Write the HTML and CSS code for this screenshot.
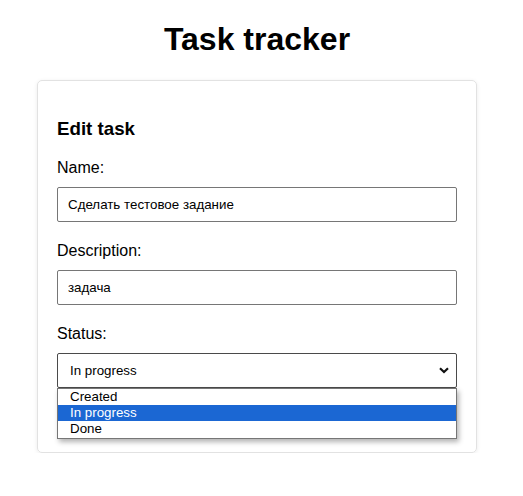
FILE: index.html
```html
<!DOCTYPE html>
<html lang="en">
<head>
<meta charset="utf-8">
<title>Task tracker</title>
<link rel="stylesheet" href="styles.css">
</head>
<body>
  <h1 class="title">Task tracker</h1>
  <div class="card">
    <h3 class="card-title">Edit task</h3>
    <form class="form">
      <div class="field">
        <label class="label" for="name">Name:</label>
        <input class="input" id="name" type="text" value="Сделать тестовое задание">
      </div>
      <div class="field">
        <label class="label" for="desc">Description:</label>
        <input class="input" id="desc" type="text" value="задача">
      </div>
      <div class="field field-last">
        <label class="label" for="status">Status:</label>
        <div class="select-wrap">
          <div class="select" id="status">
            <span class="select-value">In progress</span>
            <svg class="chevron" width="10" height="7" viewBox="0 0 10 7"><path d="M1 1.2 L5 5 L9 1.2" fill="none" stroke="#111" stroke-width="2.2"/></svg>
          </div>
          <ul class="options">
            <li class="option">Created</li>
            <li class="option option-active">In progress</li>
            <li class="option">Done</li>
          </ul>
        </div>
      </div>
    </form>
  </div>
</body>
</html>
```
FILE: styles.css
```css
html, body {
  background: #fff;
}
body {
  margin: 0 9px 0 0;
  font-family: "Liberation Sans", Arial, sans-serif;
  color: #000;
}
.title {
  font-size: 32px;
  font-weight: bold;
  text-align: center;
  margin: 21.44px 0;
  line-height: 36.8px;
}
.card {
  box-sizing: border-box;
  width: 440px;
  margin: 0 auto;
  padding: 19px 19px 64px;
  border: 1px solid #e2e2e2;
  border-radius: 5px;
  box-shadow: 0 1px 4px rgba(0, 0, 0, 0.08);
}
.card-title {
  font-size: 18.72px;
  font-weight: bold;
  margin: 18.72px 0;
  line-height: 21.5px;
}
.form {
  display: flex;
  flex-direction: column;
}
.field {
  display: flex;
  flex-direction: column;
  margin-bottom: 20px;
}
.field-last {
  margin-bottom: 0;
}
.label {
  font-size: 16px;
  line-height: 18px;
  margin-bottom: 10px;
}
.input {
  box-sizing: border-box;
  width: 400px;
  height: 35px;
  margin: 0;
  padding: 0 10px;
  border: 1px solid #767676;
  border-radius: 2px;
  font-family: "Liberation Sans", Arial, sans-serif;
  font-size: 13.33px;
  color: #000;
  background: #fff;
  outline: none;
}
.select-wrap {
  position: relative;
  width: 400px;
}
.select {
  box-sizing: border-box;
  height: 35px;
  display: flex;
  align-items: center;
  justify-content: space-between;
  padding: 0 6px 0 12px;
  border: 1px solid #4a4a4a;
  border-radius: 2px;
  font-size: 13.33px;
  background: #fff;
}
.chevron {
  display: block;
  margin-right: 1px;
}
.options {
  position: absolute;
  left: 0;
  top: 35px;
  width: 400px;
  box-sizing: border-box;
  margin: 0;
  padding: 0;
  list-style: none;
  background: #fff;
  border: 1px solid #767676;
  box-shadow: 2px 3px 5px rgba(0, 0, 0, 0.3);
  z-index: 2;
}
.option {
  height: 16.4px;
  line-height: 16.4px;
  padding-left: 12px;
  font-size: 13.33px;
  color: #000;
}
.option-active {
  background: #1b67d3;
  color: #fff;
}
```
